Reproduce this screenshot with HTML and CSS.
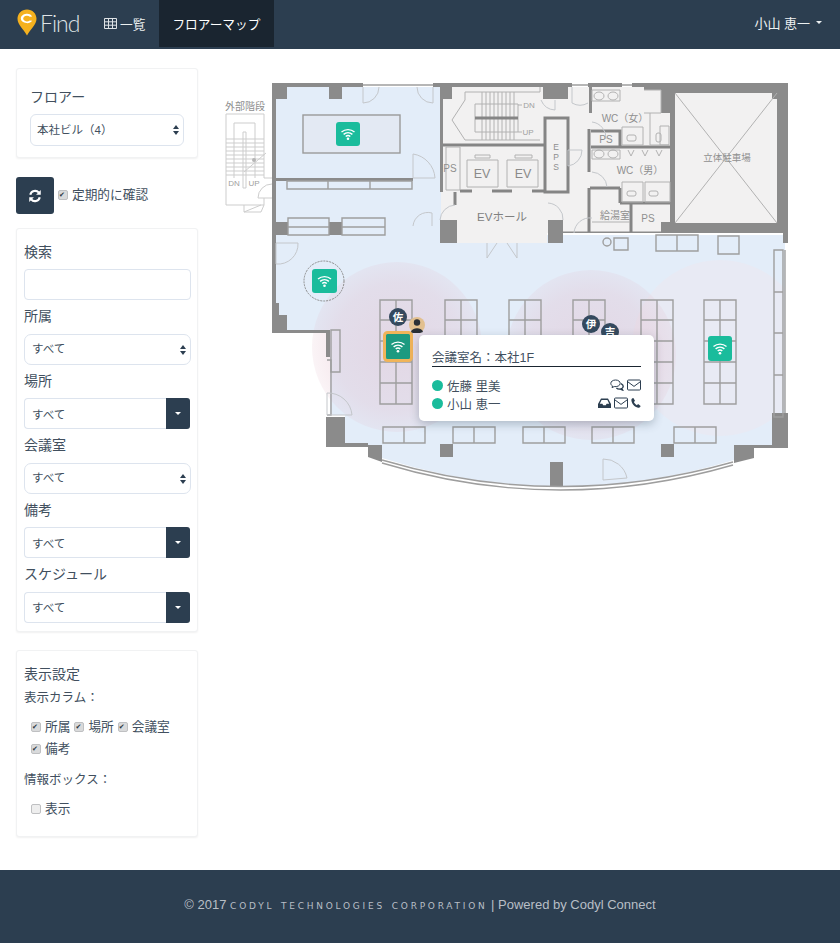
FILE: index.html
```html
<!DOCTYPE html>
<html lang="ja">
<head>
    <meta charset="UTF-8">
    <meta name="viewport" content="width=device-width, initial-scale=1.0">
    <title>Find フロアーマップ</title>
    <link rel="stylesheet" href="styles.css">
</head>
<body>
    <header class="navbar">
        <a class="brand" href="#">
            <svg class="brand-pin" viewBox="0 0 20 27" width="20" height="27">
                <path d="M10 0.5C4.6 0.5 0.5 4.6 0.5 9.8C0.5 15.6 6.6 20.4 10 26.5C13.4 20.4 19.5 15.6 19.5 9.8C19.5 4.6 15.4 0.5 10 0.5Z" fill="#f5b11e"/>
                <path d="M15.2 7.4C13.8 5.2 11.6 4.6 9.4 4.8C6 5.2 3.8 7.2 3.8 9.6C3.8 12 6 13.8 9.4 14.1C11.8 14.3 13.9 13.6 15.2 11.8L12.8 11.5C11.8 12.3 10.6 12.5 9.6 12.4C7.4 12.2 6.2 11 6.2 9.6C6.2 8.2 7.4 6.9 9.6 6.7C10.8 6.6 12 6.9 12.8 7.7Z" fill="#fff"/>
            </svg>
            <span class="brand-name">Find</span>
        </a>
        <nav class="nav-links">
            <a class="nav-link" href="#">
                <svg class="table-icon" viewBox="0 0 13 11" width="13" height="11">
                    <path d="M0.5 0.5H12.5V10.5H0.5ZM0.5 3.8H12.5M0.5 7.2H12.5M4.5 0.5V10.5M8.5 0.5V10.5" fill="none" stroke="#dfe3e6" stroke-width="1"/>
                </svg>
                一覧
            </a>
            <a class="nav-link active" href="#">フロアーマップ</a>
        </nav>
        <a class="nav-user" href="#">小山 恵一<span class="caret"></span></a>
    </header>

    <div class="page">
        <aside class="sidebar">
            <section class="panel panel-floor">
                <label class="floor-label">フロアー</label>
                <div class="select-wrap">
                    <select class="field"><option>本社ビル（4）</option></select>
                </div>
            </section>

            <div class="refresh-row">
                <button class="refresh-button" type="button">
                    <svg viewBox="0 0 16 16" width="14" height="14">
                        <path d="M2.6 6.6A5.6 5.6 0 0 1 12.4 4.2" fill="none" stroke="#fff" stroke-width="2.4"/>
                        <path d="M14.6 1.2V6.6H9.2Z" fill="#fff"/>
                        <path d="M13.4 9.4A5.6 5.6 0 0 1 3.6 11.8" fill="none" stroke="#fff" stroke-width="2.4"/>
                        <path d="M1.4 14.8V9.4H6.8Z" fill="#fff"/>
                    </svg>
                </button>
                <label class="check refresh-check"><input type="checkbox" checked>定期的に確認</label>
            </div>

            <section class="panel panel-search">
                <label class="field-label">検索</label>
                <input class="field" type="text">
                <label class="field-label">所属</label>
                <div class="select-wrap">
                    <select class="field"><option>すべて</option></select>
                </div>
                <label class="field-label">場所</label>
                <div class="combo">
                    <input class="field" type="text" value="すべて">
                    <button class="combo-button" type="button"><span class="caret"></span></button>
                </div>
                <label class="field-label">会議室</label>
                <div class="select-wrap">
                    <select class="field"><option>すべて</option></select>
                </div>
                <label class="field-label">備考</label>
                <div class="combo">
                    <input class="field" type="text" value="すべて">
                    <button class="combo-button" type="button"><span class="caret"></span></button>
                </div>
                <label class="field-label">スケジュール</label>
                <div class="combo">
                    <input class="field" type="text" value="すべて">
                    <button class="combo-button" type="button"><span class="caret"></span></button>
                </div>
            </section>

            <section class="panel panel-display">
                <h4>表示設定</h4>
                <p class="display-title">表示カラム：</p>
                <div class="check-list">
                    <label class="check"><input type="checkbox" checked>所属</label>
                    <label class="check"><input type="checkbox" checked>場所</label>
                    <label class="check"><input type="checkbox" checked>会議室</label>
                    <label class="check"><input type="checkbox" checked>備考</label>
                </div>
                <p class="display-title info-title">情報ボックス：</p>
                <div class="check-list">
                    <label class="check"><input type="checkbox">表示</label>
                </div>
            </section>
        </aside>

        <main class="map">
            <svg class="floor" viewBox="220 70 580 440" width="580" height="440">
                <defs>
                    <radialGradient id="heat-fill">
                        <stop offset="0" stop-color="#e2b9c8" stop-opacity="0.42"/>
                        <stop offset="0.75" stop-color="#e2b9c8" stop-opacity="0.3"/>
                        <stop offset="1" stop-color="#e2b9c8" stop-opacity="0.16"/>
                    </radialGradient>
                    <clipPath id="floor-clip">
                        <path d="M275 87H445V235H785V415H772V445H734V460Q557 514 382 458V445H345V415H330V333H275Z"/>
                    </clipPath>
                    <symbol id="wifi" viewBox="0 0 24 24" overflow="visible">
                        <path d="M5.5 10A10 10 0 0 1 18.5 10M7.6 12.4A6.8 6.8 0 0 1 16.4 12.4M9.7 14.6A3.4 3.4 0 0 1 14.3 14.6" fill="none" stroke="#fff" stroke-width="1.4"/>
                        <circle cx="12" cy="16.8" r="1.3" fill="#fff"/>
                    </symbol>
                    <g id="desk">
                        <path d="M0 0H32V104H0ZM16 0V104M0 20H32M0 41H32M0 62H32M0 83H32" class="ln"/>
                    </g>
                    <g id="bench">
                        <path d="M0 0H42V16H0ZM21 0V16" class="ln"/>
                    </g>
                </defs>

                <!-- floor areas -->
                <path class="area" d="M275 87H445V235H785V415H772V445H734V460Q557 514 382 458V445H345V415H330V333H275Z"/>
                <circle class="heat-soft" cx="720" cy="348" r="88" clip-path="url(#floor-clip)"/>
                <circle fill="url(#heat-fill)" cx="397" cy="347" r="85"/>
                <circle fill="url(#heat-fill)" cx="591" cy="355" r="85"/>
                <rect class="core" x="441" y="87" width="230" height="146"/>
                <rect class="core" x="457" y="192" width="90" height="51"/>
                <rect class="core" x="675" y="93" width="102" height="130"/>

                <!-- outside stairs -->
                <text class="map-label" x="245" y="110" text-anchor="middle">外部階段</text>
                <path class="ln-soft" d="M226 114H264V178H273M226 114V205H264V198M234 178V123H255V178M243 132H246V188H243ZM226 139H264M226 143H264M226 147H264M226 151H264M226 155H264M226 159H264M226 163H264M226 167H264M226 171H264M226 175H264M244 172L266 153M244 205V212H261L264 205M244 212L261 205"/>
                <circle cx="254" cy="160" r="2" fill="#b5b5b5"/>
                <text class="map-small" x="234" y="186" text-anchor="middle">DN</text>
                <text class="map-small" x="254" y="186" text-anchor="middle">UP</text>
                <path class="ln-soft" d="M272 184A14 14 0 0 0 258 198H272"/>

                <!-- walls -->
                <path class="wall" d="M272 83H363V87H342V99H329V87H287V99H276V178H413V181H276V198H272ZM433 83H572V87H568V99H543V87H452V99H443V192H440V87H433ZM588 83H622V87H592V113H589V87H588ZM632 83H788V243H783V233H563V231.500H661V222H670V113H661V90H644V87H632ZM675 93V223H777V99H772V93ZM272 198H276V222H288V235H276V243H272ZM329 222H342V235H329ZM272 243H276V303H279V315H287V330H330V357H326V333H272ZM326 417H345V443H368V445H382V462L368 457V447H326ZM550 462H563V487H550ZM440 444H453V457H440ZM661 444H674V457H661ZM734 445H772V413H788V448H754V458L734 463ZM440 220H457V243H440ZM548 220H563V243H548Z"/>
                <path class="wall-thin" d="M443 145H545M589 129V172M591 131H620V147M591 147H670M590 188H620M620 188V203M620 203H670M631 203V232M589 188V232M455 192V205M460 191H472M492 191H512M532 191H545M545 118H568V192H545Z"/>
                <path class="ln" d="M363 85H433M572 85H588M622 85H632M327 360H331V415H327M785 250V413M382 460Q557 512 733 462M382 463Q557 516 733 465"/>

                <!-- core rooms -->
                <path class="ln-core" d="M452 120L465 100V92H540V87M452 120L465 140H540M475 104H518V132H475ZM482 92V140M486 92V140M490 92V140M494 92V140M498 92V140M502 92V140M506 92V140M510 92V140M514 92V140M518 105H522M518 132H522"/>
                <path class="wall-thin" d="M475 118H518"/>
                <path class="ln-core" d="M446 147H460V190H446ZM467 160H498V187H467ZM507 160H538V187H507ZM475 155H490V158H475ZM515 155H532V158H515ZM675 93L777 223M777 93L675 223M592 90H620V101H592ZM592 150H620V159H592ZM622 127H643V145H622ZM650 113V145H669M660 126H669V145H660ZM622 182H643V202H622ZM645 182H670V202H645ZM644 90H661V113H644M592 222H630"/>
                <ellipse class="ln-core" cx="599" cy="96" rx="5" ry="4"/>
                <ellipse class="ln-core" cx="613" cy="96" rx="5" ry="4"/>
                <ellipse class="ln-core" cx="599" cy="154" rx="5" ry="4"/>
                <ellipse class="ln-core" cx="613" cy="154" rx="5" ry="4"/>
                <path class="ln-core" d="M628 150L631 156L634 150M642 150L645 156L648 150M656 150L659 156L662 150"/>
                <rect class="ln-core" x="627" y="135" width="9" height="6" rx="2"/>
                <rect class="ln-core" x="656" y="133" width="5" height="9" rx="2"/>
                <rect class="ln-core" x="627" y="191" width="9" height="5" rx="2"/>
                <rect class="ln-core" x="649" y="191" width="9" height="5" rx="2"/>
                <path class="ln-door" d="M413 154A26 26 0 0 1 435 178H413V154ZM363 87V103A16 16 0 0 0 379 87M433 87V103A16 16 0 0 1 417 87M413 226A15 15 0 0 1 432 213V226M276 243H298A20 20 0 0 1 276 264ZM327 393A24 24 0 0 1 352 415H327ZM603 459A24 24 0 0 1 627 478L603 480ZM541 100A16 16 0 0 0 555 110V100M572 87V103A16 16 0 0 0 588 103M592 122A16 16 0 0 1 606 139M592 172A16 16 0 0 1 607 187M568 150H582A16 16 0 0 1 568 166ZM548 203A16 16 0 0 1 563 220M592 218A16 16 0 0 0 574 233M440 220A16 16 0 0 1 455 205M487 243V258L497 243M517 243V258L507 243"/>

                <text class="map-label" x="606" y="143" text-anchor="middle">PS</text>
                <text class="map-label" x="450" y="172" text-anchor="middle">PS</text>
                <text class="map-label" x="648" y="222" text-anchor="middle">PS</text>
                <text class="map-label" x="625" y="122" text-anchor="middle">WC（女）</text>
                <text class="map-label" x="640" y="174" text-anchor="middle">WC（男）</text>
                <text class="map-label" x="615" y="219" text-anchor="middle">給湯室</text>
                <text class="map-park" x="727" y="161" text-anchor="middle">立体駐車場</text>
                <text class="map-eps" x="556" y="150" text-anchor="middle">E</text>
                <text class="map-eps" x="556" y="160" text-anchor="middle">P</text>
                <text class="map-eps" x="556" y="170" text-anchor="middle">S</text>
                <text class="map-big" x="482" y="178" text-anchor="middle">EV</text>
                <text class="map-big" x="523" y="178" text-anchor="middle">EV</text>
                <text class="map-hall" x="502" y="221" text-anchor="middle">EVホール</text>
                <text class="map-small" x="529" y="108" text-anchor="middle">DN</text>
                <text class="map-small" x="528" y="135" text-anchor="middle">UP</text>

                <!-- furniture -->
                <rect class="table" x="303" y="115" width="97" height="38"/>
                <path class="ln" d="M287 181H412V189H287ZM328 181V189M370 181V189M288 218H329V235H288ZM288 227H329M342 218H385V235H342ZM342 227H385M331 330H340V372H331ZM774 250H783V417H774ZM774 292H783M774 333H783M774 375H783"/>
                <path class="ln" d="M614 238H628V250H614ZM656 235H698V251H656ZM677 235V251M718 236H739V254H718Z"/>
                <circle class="ln" cx="607" cy="242" r="4"/>
                <use href="#desk" x="380" y="300"/>
                <use href="#desk" x="445" y="300"/>
                <use href="#desk" x="509" y="300"/>
                <use href="#desk" x="573" y="300"/>
                <use href="#desk" x="641" y="300"/>
                <use href="#desk" x="704" y="300"/>
                <use href="#bench" x="383" y="427"/>
                <use href="#bench" x="453" y="427"/>
                <use href="#bench" x="523" y="427"/>
                <use href="#bench" x="592" y="427"/>
                <use href="#bench" x="674" y="427"/>

                <!-- access points -->
                <rect class="ap" x="336" y="122" width="24" height="24" rx="3"/>
                <use href="#wifi" x="336" y="122" width="24" height="24"/>
                <circle class="ap-ring" cx="324" cy="281" r="20"/>
                <rect class="ap" x="312" y="269" width="25" height="24" rx="3"/>
                <use href="#wifi" x="312" y="269" width="25" height="24"/>
                <rect class="ap-active" x="384.5" y="332.5" width="27" height="28" rx="3"/>
                <use href="#wifi" x="386" y="334" width="24" height="25"/>
                <rect class="ap" x="708" y="336" width="24" height="25" rx="3"/>
                <use href="#wifi" x="708" y="336" width="24" height="25"/>

                <!-- people -->
                <circle class="person" cx="398" cy="317" r="9"/>
                <text class="person-name" x="398" y="321" text-anchor="middle">佐</text>
                <circle cx="417" cy="325" r="8" fill="#e2c08f"/>
                <circle cx="417" cy="322.500" r="3.2" fill="#2a2f36"/>
                <path d="M411 332C412 327 422 327 423 332L420 333H413Z" fill="#2a2f36"/>
                <circle class="person" cx="591" cy="324" r="9"/>
                <text class="person-name" x="591" y="328" text-anchor="middle">伊</text>
                <circle class="person" cx="610" cy="332" r="9"/>
                <text class="person-name" x="610" y="336" text-anchor="middle">吉</text>
            </svg>

            <div class="room-tip">
                <div class="room-name">会議室名：本社1F</div>
                <div class="room-row">
                    <span class="dot"></span>
                    <span class="room-person">佐藤 里美</span>
                    <svg class="tip-icon" viewBox="0 0 14 12" width="14" height="12">
                        <path d="M5.6 1C2.8 1 .8 2.5 .8 4.4C.8 5.5 1.5 6.4 2.5 7L2 8.6L4.2 7.6C6.9 8 10.2 6.8 10.2 4.4C10.2 2.5 8.3 1 5.6 1Z" fill="#fff" stroke="#2c3e50" stroke-width="1"/>
                        <path d="M11 4.6C12.4 5.2 13.2 6.2 13.2 7.3C13.2 8.2 12.7 9 11.9 9.5L12.6 11L10.4 10C8.9 10.3 7.4 9.9 6.4 9" fill="none" stroke="#2c3e50" stroke-width="1.4"/>
                    </svg>
                    <svg class="tip-icon" viewBox="0 0 14 12" width="14" height="12">
                        <path d="M1.5 1H12.5A1 1 0 0 1 13.5 2V10A1 1 0 0 1 12.5 11H1.5A1 1 0 0 1 .5 10V2A1 1 0 0 1 1.5 1ZM.8 2.8L7 7.4L13.2 2.8" fill="none" stroke="#2c3e50" stroke-width="1"/>
                    </svg>
                </div>
                <div class="room-row">
                    <span class="dot"></span>
                    <span class="room-person">小山 恵一</span>
                    <svg class="tip-icon" viewBox="0 0 13 12" width="13" height="12">
                        <path d="M3 1.5H10L13 7V11H0V7ZM3.6 3L1.8 6.8H4.4L5.2 8.2H7.8L8.6 6.8H11.2L9.4 3Z" fill="#2c3e50" fill-rule="evenodd"/>
                    </svg>
                    <svg class="tip-icon" viewBox="0 0 14 12" width="14" height="12">
                        <path d="M1.5 1H12.5A1 1 0 0 1 13.5 2V10A1 1 0 0 1 12.5 11H1.5A1 1 0 0 1 .5 10V2A1 1 0 0 1 1.5 1ZM.8 2.8L7 7.4L13.2 2.8" fill="none" stroke="#2c3e50" stroke-width="1"/>
                    </svg>
                    <svg class="tip-icon" viewBox="0 0 11 12" width="10" height="12">
                        <path d="M2.6 .6L4.4 3.6L3.2 5C3.9 6.6 5 7.7 6.4 8.4L7.8 7.2L10.6 9.2C10.2 10.6 9 11.4 7.8 11.2C3.8 10.4 .8 6.8 .4 3C.3 1.8 1.2 .8 2.6 .6Z" fill="#2c3e50"/>
                    </svg>
                </div>
            </div>
        </main>
    </div>

    <footer class="footer">
        © 2017 <span class="footer-company">codyl technologies corporation</span> | Powered by Codyl Connect
    </footer>
</body>
</html>
```

FILE: styles.css
```css
body {
    margin: 0;
    background: #ffffff;
    color: #414f5e;
    font-family: "Liberation Sans", "Noto Sans CJK JP", sans-serif;
    font-size: 13px;
}

/* navbar */
.navbar {
    display: flex;
    height: 49px;
    background-color: #2c3e50;
}
.navbar a {
    color: #ecf0f1;
    text-decoration: none;
}
.brand {
    display: flex;
    width: 74px;
    padding-left: 17px;
    gap: 3px;
    align-items: flex-start;
}
.brand-pin {
    margin-top: 9px;
}
.brand-name {
    margin-top: 7px;
    font-family: Lato, sans-serif;
    font-size: 23px;
    font-weight: 300;
    letter-spacing: -1px;
    line-height: 32px;
    color: #dfe3e6;
}
.nav-links {
    display: flex;
    height: 47px;
}
.nav-link {
    display: flex;
    align-items: center;
    gap: 3px;
    padding: 0 14px 0 13px;
    font-size: 12.7px;
}
.nav-link.active {
    background-color: #1a2530;
    color: #ffffff;
}
.nav-user {
    display: flex;
    align-items: center;
    height: 45px;
    margin-left: auto;
    padding-right: 18px;
}
.caret {
    display: inline-block;
    margin-left: 6px;
    border-top: 3px solid currentColor;
    border-left: 3px solid transparent;
    border-right: 3px solid transparent;
}

/* page */
.page {
    display: flex;
    gap: 22px;
    padding: 19px 0 33px 16px;
}
.sidebar {
    width: 182px;
    flex-shrink: 0;
}
.panel {
    box-sizing: border-box;
    background: #ffffff;
    border: 1px solid #f1f2f3;
    border-radius: 3px;
    box-shadow: 0 1px 2px rgba(0, 0, 0, 0.06);
}
.panel-floor {
    height: 90px;
    padding: 17px 13px 0;
}
.floor-label {
    display: block;
    height: 28px;
    font-size: 14px;
    line-height: 22px;
}
.select-wrap {
    position: relative;
}
.select-wrap::before,
.select-wrap::after {
    content: "";
    position: absolute;
    right: 5px;
    border-left: 3px solid transparent;
    border-right: 3px solid transparent;
}
.select-wrap::before {
    top: 11px;
    border-bottom: 4px solid #2c3e50;
}
.select-wrap::after {
    top: 17px;
    border-top: 4px solid #2c3e50;
}
.field {
    box-sizing: border-box;
    display: block;
    width: 100%;
    height: 31px;
    padding: 0 7px;
    background: #ffffff;
    border: 1px solid #dde4ee;
    border-radius: 6px;
    color: #414f5e;
    font-family: inherit;
    font-size: 11.5px;
    appearance: none;
    outline: none;
}
.panel-floor .field {
    height: 32px;
    padding: 0 6px;
}

.refresh-row {
    display: flex;
    align-items: center;
    gap: 4px;
    margin: 19px 0 14px;
}
.refresh-check {
    margin-bottom: 2px;
}
.refresh-button {
    display: flex;
    align-items: center;
    justify-content: center;
    width: 38px;
    height: 37px;
    padding: 0;
    background-color: #2c3e50;
    border: none;
    border-radius: 3px;
}
.check {
    display: inline-flex;
    align-items: center;
    font-size: 12.7px;
    line-height: 22px;
}
.check input {
    box-sizing: border-box;
    position: relative;
    width: 10px;
    height: 10px;
    margin: 0 4px 0 0;
    background: #d9dadb;
    border: 1px solid #bfc0c2;
    border-radius: 2px;
    appearance: none;
}
.check input:not(:checked) {
    background: #eeeeee;
}
.check input:checked::after {
    content: "✔";
    position: absolute;
    top: -2px;
    left: 0;
    color: #2b3540;
    font-family: "DejaVu Sans", sans-serif;
    font-size: 7px;
    line-height: 12px;
}

.panel-search {
    height: 404px;
    padding: 6.500px 6px 0 7px;
}
.field-label {
    display: block;
    height: 33.500px;
    font-size: 14px;
    line-height: 32px;
}
.panel-search .field {
    border-radius: 4px;
}
.panel-search .select-wrap .field {
    border-radius: 7px;
}
.combo {
    display: flex;
    padding-right: 1px;
}
.combo .field {
    flex: 1;
    min-width: 0;
    border-right: none;
    border-radius: 4px 0 0 4px;
}
.combo-button {
    width: 24px;
    height: 31px;
    padding: 0;
    background-color: #2c3e50;
    border: none;
    border-radius: 0 3px 3px 0;
    color: #ffffff;
}
.combo-button .caret {
    display: block;
    width: 0;
    margin: 0 auto;
}

.panel-display {
    height: 187px;
    margin-top: 18px;
    padding: 13px 7px 0;
}
.panel-display h4 {
    margin: 0;
    font-size: 14px;
    font-weight: 400;
    line-height: 20px;
}
.display-title {
    margin: 4px 0 8px;
    font-size: 12.5px;
    line-height: 20px;
}
.info-title {
    margin-top: 10px;
    margin-bottom: 8px;
}
.check-list {
    display: flex;
    flex-wrap: wrap;
    column-gap: 4px;
    padding-left: 7px;
}

/* map */
.map {
    position: relative;
    margin-top: 2px;
    height: 440px;
}
.floor {
    display: block;
}
.area {
    fill: #e3edf9;
}
.core {
    fill: #f2f1f1;
}
.heat-soft {
    fill: #e8eaf4;
}
.wall {
    fill: #8b8b8b;
}
.wall-thin {
    fill: none;
    stroke: #858585;
    stroke-width: 3;
}
.ln {
    fill: none;
    stroke: #9e9e9e;
    stroke-width: 1.4;
}
.ln-soft {
    fill: none;
    stroke: #cdcdcd;
    stroke-width: 1;
}
.ln-core {
    fill: none;
    stroke: #b2b2b2;
    stroke-width: 1;
}
.ln-door {
    fill: none;
    stroke: #c4c7cb;
    stroke-width: 1;
}
.table {
    fill: #e3e9f3;
    stroke: #9a9a9a;
    stroke-width: 1.4;
}
.map-label {
    fill: #8f8f8f;
    font-size: 10px;
}
.map-park {
    fill: #8f8f8f;
    font-size: 9.5px;
}
.map-eps {
    fill: #8f8f8f;
    font-size: 8.5px;
}
.map-small {
    fill: #a0a0a0;
    font-size: 8px;
}
.map-big {
    fill: #8a8a8a;
    font-size: 12.5px;
}
.map-hall {
    fill: #808080;
    font-size: 11.5px;
}
.ap {
    fill: #1abc9c;
}
.ap-active {
    fill: #1c9a80;
    stroke: #f0b45a;
    stroke-width: 3;
}
.ap-ring {
    fill: none;
    stroke: #8a8a8a;
    stroke-width: 1;
    stroke-dasharray: 2 1;
}
.person {
    fill: #34495e;
}
.person-name {
    fill: #ffffff;
    font-size: 10.5px;
    font-weight: 700;
}

/* info box over the map */
.room-tip {
    box-sizing: border-box;
    position: absolute;
    left: 199px;
    top: 265px;
    width: 235px;
    height: 86px;
    padding: 13px 13px 0;
    background: #ffffff;
    border-radius: 5px;
    box-shadow: 0 3px 10px rgba(44, 62, 80, 0.3);
}
.room-name {
    height: 18px;
    margin-bottom: 9px;
    border-bottom: 1px solid #1a2530;
    font-size: 12.5px;
    line-height: 21px;
}
.room-row {
    display: flex;
    align-items: center;
    gap: 3px;
    height: 18px;
    font-size: 12.5px;
}
.dot {
    width: 11px;
    height: 11px;
    margin-right: 1px;
    background-color: #1abc9c;
    border-radius: 50%;
}
.room-person {
    margin-right: auto;
}

.footer {
    height: 73px;
    background-color: #2c3e50;
    color: #b8bfc6;
    font-size: 13px;
    line-height: 69px;
    text-align: center;
}
.footer-company {
    font-family: "DejaVu Sans", sans-serif;
    font-size: 13px;
    font-variant: small-caps;
    letter-spacing: 2.750px;
}
```
